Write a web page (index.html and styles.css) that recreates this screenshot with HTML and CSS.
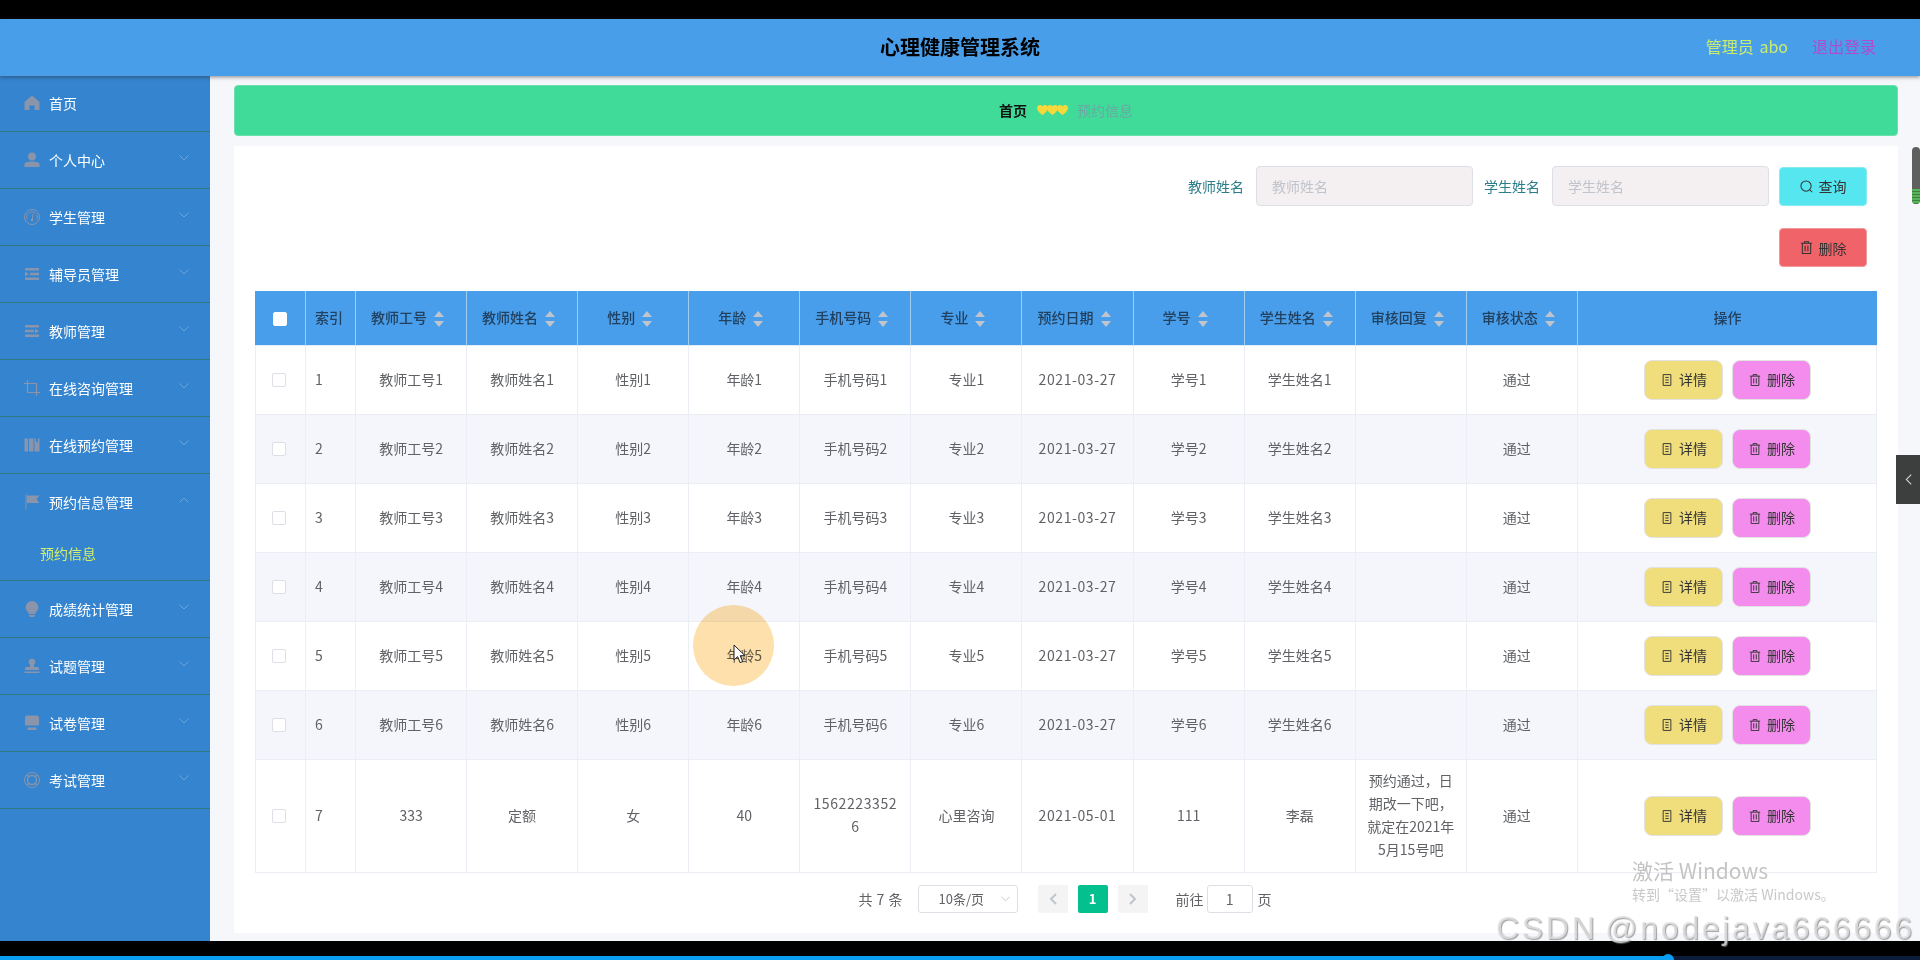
FILE: index.html
```html
<!DOCTYPE html>
<html lang="zh-CN">
<head>
	<meta charset="UTF-8">
	<title>心理健康管理系统</title>
	<link rel="stylesheet" href="styles.css">
</head>
<body>
	<svg class="defs" width="0" height="0">
		<symbol id="i-home" viewBox="0 0 16 16"><path d="M8 1C7.4 1 7 1.300 6.600 1.600L1 6.500C.7 6.800.5 7.200.5 7.700V15h5v-4.500h5V15h5V7.700c0-.5-.2-.9-.5-1.200L9.400 1.600C9 1.300 8.600 1 8 1z"/></symbol>
		<symbol id="i-user" viewBox="0 0 16 16"><circle cx="8" cy="4.500" r="4"/><path d="M.5 15v-2.500C.5 10.500 3 9.500 8 9.500s7.500 1 7.500 3V15z"/></symbol>
		<symbol id="i-gauge" viewBox="0 0 16 16"><g fill="none" stroke="currentColor"><circle cx="8" cy="8" r="7.500"/><path d="M3.200 10.500a5.300 5.300 0 1 1 9.600 0"/><path d="M9 5l-.7 5"/></g><circle cx="8" cy="11" r="1.300"/></symbol>
		<symbol id="i-fold" viewBox="0 0 16 16"><path d="M1 2h14v2.400H1zM6 6.800h9v2.400H6zM1 11.600h14V14H1zM5 8L1 5.500v5z"/></symbol>
		<symbol id="i-unfold" viewBox="0 0 16 16"><path d="M1 2h14v2.400H1zM1 6.800h9v2.400H1zM1 11.600h14V14H1zM15 8l-4-2.500v5z"/></symbol>
		<symbol id="i-crop" viewBox="0 0 16 16"><path d="M3.500 0v12.500H16M0 3.500h12.500V16" fill="none" stroke="currentColor" stroke-width="1.200"/></symbol>
		<symbol id="i-book" viewBox="0 0 16 16"><path d="M.5 1.500h3.500v13H.5zM5 1.500h4.500v13H5zM10.500 1.500h1.500v4l1-1 1 1v-4h1.500v13h-5z"/></symbol>
		<symbol id="i-flag" viewBox="0 0 16 16"><path d="M1.500 .5h1v15h-1zM3 1.500h12.500l-3 3.800 3 3.700H3z"/></symbol>
		<symbol id="i-bulb" viewBox="0 0 16 16"><path d="M8 0a6.300 6.300 0 0 0-3.500 11.500V13h7v-1.500A6.300 6.300 0 0 0 8 0zM5 14h6v.8L9.500 16h-3L5 14.800z"/></symbol>
		<symbol id="i-stamp" viewBox="0 0 16 16"><path d="M8 .5a3.500 3.500 0 0 0-2 6.300V9H2.500C1.500 9 1 9.700 1 10.500V12h14v-1.500c0-.8-.5-1.500-1.500-1.500H10V6.800A3.500 3.500 0 0 0 8 .5zM.5 13.500h15V15H.5z"/></symbol>
		<symbol id="i-shop" viewBox="0 0 16 16"><path d="M3 .5h10c1.200 0 2 .8 2 2V10c-1 1-2 1-2.700 0-.8 1-1.800 1-2.600 0-.6 1-2.800 1-3.400 0-.8 1-1.800 1-2.600 0C3 11 2 11 1 10V2.500C1 1.300 1.800.5 3 .5zM3.500 12.500h9V15h-9z"/></symbol>
		<symbol id="i-ring" viewBox="0 0 16 16"><g fill="none" stroke="currentColor"><circle cx="8" cy="8" r="7.500"/><circle cx="8" cy="8" r="4.500" stroke-width="1.300"/><path d="M3 3l2 2M13 3l-2 2M3 13l2-2M13 13l-2-2" stroke-width="1.300"/></g></symbol>
		<symbol id="i-chevron" viewBox="0 0 10 6"><path d="M.5 .5 5 5 9.500 .5" fill="none" stroke="currentColor"/></symbol>
		<symbol id="i-left" viewBox="0 0 8 12"><path d="M7 1 2 6l5 5" fill="none" stroke="currentColor" stroke-width="2"/></symbol>
		<symbol id="i-right" viewBox="0 0 8 12"><path d="M1 1l5 5-5 5" fill="none" stroke="currentColor" stroke-width="2"/></symbol>
		<symbol id="i-heart" viewBox="0 0 12 11"><path d="M0 3.200C0 1.300 1.400 0 3 0c1.300 0 2.400.7 3 1.500C6.600.7 7.700 0 9 0c1.600 0 3 1.300 3 3.200C12 6.500 8 9.500 6 11 4 9.500 0 6.500 0 3.200z"/></symbol>
		<symbol id="i-search" viewBox="0 0 14 14"><g fill="none" stroke="currentColor" stroke-width="1.100"><circle cx="6.500" cy="6.500" r="5.500"/><path d="M10.500 10.500l2.500 2.500"/></g></symbol>
		<symbol id="i-trash" viewBox="0 0 14 14"><path d="M1 2.500h12M4.800 2.500V.7h4.400v1.800M2.500 2.500v11h9v-11M5.500 5v6M8.500 5v6" fill="none" stroke="currentColor" stroke-width="1.100"/></symbol>
		<symbol id="i-doc" viewBox="0 0 14 14"><path d="M2.500 .7h9v12.600h-9zM5 4h4M5 7h4M5 10h4" fill="none" stroke="currentColor" stroke-width="1.100"/></symbol>
	</svg>

	<div class="black-bar top"></div>

	<header class="topbar">
		<h1 class="title">心理健康管理系统</h1>
		<div class="user-area">
			<span class="admin">管理员 abo</span>
			<span class="logout">退出登录</span>
		</div>
	</header>

	<div class="layout">
		<nav class="sidebar">
			<div class="menu-item first"><svg class="menu-icon"><use href="#i-home"/></svg><span>首页</span></div>
			<div class="menu-item"><svg class="menu-icon"><use href="#i-user"/></svg><span>个人中心</span><svg class="menu-arrow"><use href="#i-chevron"/></svg></div>
			<div class="menu-item"><svg class="menu-icon"><use href="#i-gauge"/></svg><span>学生管理</span><svg class="menu-arrow"><use href="#i-chevron"/></svg></div>
			<div class="menu-item"><svg class="menu-icon"><use href="#i-fold"/></svg><span>辅导员管理</span><svg class="menu-arrow"><use href="#i-chevron"/></svg></div>
			<div class="menu-item"><svg class="menu-icon"><use href="#i-unfold"/></svg><span>教师管理</span><svg class="menu-arrow"><use href="#i-chevron"/></svg></div>
			<div class="menu-item"><svg class="menu-icon"><use href="#i-crop"/></svg><span>在线咨询管理</span><svg class="menu-arrow"><use href="#i-chevron"/></svg></div>
			<div class="menu-item"><svg class="menu-icon"><use href="#i-book"/></svg><span>在线预约管理</span><svg class="menu-arrow"><use href="#i-chevron"/></svg></div>
			<div class="menu-group">
				<div class="menu-item open"><svg class="menu-icon"><use href="#i-flag"/></svg><span>预约信息管理</span><svg class="menu-arrow up"><use href="#i-chevron"/></svg></div>
				<div class="submenu-item">预约信息</div>
			</div>
			<div class="menu-item"><svg class="menu-icon"><use href="#i-bulb"/></svg><span>成绩统计管理</span><svg class="menu-arrow"><use href="#i-chevron"/></svg></div>
			<div class="menu-item"><svg class="menu-icon"><use href="#i-stamp"/></svg><span>试题管理</span><svg class="menu-arrow"><use href="#i-chevron"/></svg></div>
			<div class="menu-item"><svg class="menu-icon"><use href="#i-shop"/></svg><span>试卷管理</span><svg class="menu-arrow"><use href="#i-chevron"/></svg></div>
			<div class="menu-item"><svg class="menu-icon"><use href="#i-ring"/></svg><span>考试管理</span><svg class="menu-arrow"><use href="#i-chevron"/></svg></div>
		</nav>

		<main class="content">
			<div class="breadcrumb">
				<span class="crumb-home">首页</span>
				<span class="crumb-sep">
					<svg><use href="#i-heart"/></svg><svg><use href="#i-heart"/></svg><svg><use href="#i-heart"/></svg>
				</span>
				<span class="crumb-now">预约信息</span>
			</div>

			<section class="panel">
				<div class="search-row">
					<label class="search-label">教师姓名</label>
					<div class="search-input">教师姓名</div>
					<label class="search-label">学生姓名</label>
					<div class="search-input">学生姓名</div>
					<button class="tool-btn btn-query"><svg><use href="#i-search"/></svg>查询</button>
				</div>
				<div class="action-row">
					<button class="tool-btn btn-remove"><svg><use href="#i-trash"/></svg>删除</button>
				</div>

				<table class="data-table">
					<colgroup>
						<col class="col-first"><col class="col-index">
						<col class="col-mid"><col class="col-mid"><col class="col-mid"><col class="col-mid"><col class="col-mid"><col class="col-mid"><col class="col-mid"><col class="col-mid"><col class="col-mid"><col class="col-mid"><col class="col-mid">
						<col class="col-op">
					</colgroup>
					<thead>
						<tr>
							<th><span class="check head"></span></th>
							<th class="left">索引</th>
							<th>教师工号<i class="sort"></i></th>
							<th>教师姓名<i class="sort"></i></th>
							<th>性别<i class="sort"></i></th>
							<th>年龄<i class="sort"></i></th>
							<th>手机号码<i class="sort"></i></th>
							<th>专业<i class="sort"></i></th>
							<th>预约日期<i class="sort"></i></th>
							<th>学号<i class="sort"></i></th>
							<th>学生姓名<i class="sort"></i></th>
							<th>审核回复<i class="sort"></i></th>
							<th>审核状态<i class="sort"></i></th>
							<th>操作</th>
						</tr>
					</thead>
					<tbody>
						<tr>
							<td><span class="check"></span></td><td class="left">1</td>
							<td>教师工号1</td><td>教师姓名1</td><td>性别1</td><td>年龄1</td><td>手机号码1</td><td>专业1</td><td class="digits">2021-03-27</td><td>学号1</td><td>学生姓名1</td><td></td><td class="status">通过</td>
							<td><button class="row-btn detail"><svg><use href="#i-doc"/></svg>详情</button><button class="row-btn del"><svg><use href="#i-trash"/></svg>删除</button></td>
						</tr>
						<tr>
							<td><span class="check"></span></td><td class="left">2</td>
							<td>教师工号2</td><td>教师姓名2</td><td>性别2</td><td>年龄2</td><td>手机号码2</td><td>专业2</td><td class="digits">2021-03-27</td><td>学号2</td><td>学生姓名2</td><td></td><td class="status">通过</td>
							<td><button class="row-btn detail"><svg><use href="#i-doc"/></svg>详情</button><button class="row-btn del"><svg><use href="#i-trash"/></svg>删除</button></td>
						</tr>
						<tr>
							<td><span class="check"></span></td><td class="left">3</td>
							<td>教师工号3</td><td>教师姓名3</td><td>性别3</td><td>年龄3</td><td>手机号码3</td><td>专业3</td><td class="digits">2021-03-27</td><td>学号3</td><td>学生姓名3</td><td></td><td class="status">通过</td>
							<td><button class="row-btn detail"><svg><use href="#i-doc"/></svg>详情</button><button class="row-btn del"><svg><use href="#i-trash"/></svg>删除</button></td>
						</tr>
						<tr>
							<td><span class="check"></span></td><td class="left">4</td>
							<td>教师工号4</td><td>教师姓名4</td><td>性别4</td><td>年龄4</td><td>手机号码4</td><td>专业4</td><td class="digits">2021-03-27</td><td>学号4</td><td>学生姓名4</td><td></td><td class="status">通过</td>
							<td><button class="row-btn detail"><svg><use href="#i-doc"/></svg>详情</button><button class="row-btn del"><svg><use href="#i-trash"/></svg>删除</button></td>
						</tr>
						<tr>
							<td><span class="check"></span></td><td class="left">5</td>
							<td>教师工号5</td><td>教师姓名5</td><td>性别5</td><td>年龄5</td><td>手机号码5</td><td>专业5</td><td class="digits">2021-03-27</td><td>学号5</td><td>学生姓名5</td><td></td><td class="status">通过</td>
							<td><button class="row-btn detail"><svg><use href="#i-doc"/></svg>详情</button><button class="row-btn del"><svg><use href="#i-trash"/></svg>删除</button></td>
						</tr>
						<tr>
							<td><span class="check"></span></td><td class="left">6</td>
							<td>教师工号6</td><td>教师姓名6</td><td>性别6</td><td>年龄6</td><td>手机号码6</td><td>专业6</td><td class="digits">2021-03-27</td><td>学号6</td><td>学生姓名6</td><td></td><td class="status">通过</td>
							<td><button class="row-btn detail"><svg><use href="#i-doc"/></svg>详情</button><button class="row-btn del"><svg><use href="#i-trash"/></svg>删除</button></td>
						</tr>
						<tr>
							<td><span class="check"></span></td><td class="left">7</td>
							<td>333</td><td>定额</td><td>女</td><td>40</td><td class="digits long">15622233526</td><td>心里咨询</td><td class="digits">2021-05-01</td><td>111</td><td>李磊</td><td class="long">预约通过，日期改一下吧，就定在2021年5月15号吧</td><td class="status">通过</td>
							<td><button class="row-btn detail"><svg><use href="#i-doc"/></svg>详情</button><button class="row-btn del"><svg><use href="#i-trash"/></svg>删除</button></td>
						</tr>
					</tbody>
				</table>

				<div class="pagination">
					<span class="total">共 7 条</span>
					<div class="page-size">10条/页<svg><use href="#i-chevron"/></svg></div>
					<span class="page-btn arrow"><svg><use href="#i-left"/></svg></span>
					<span class="page-btn current">1</span>
					<span class="page-btn arrow"><svg><use href="#i-right"/></svg></span>
					<span class="jump">前往</span>
					<span class="jump-input">1</span>
					<span class="jump-end">页</span>
				</div>
			</section>
		</main>
	</div>

	<div class="black-bar bottom"></div>
	<div class="progress"><div class="progress-done"></div></div>

	<!-- things lying over the page -->
	<div class="scroll-thumb"><div class="scroll-grip"></div></div>
	<div class="side-tab"><svg><use href="#i-chevron"/></svg></div>
	<div class="click-spot"></div>
	<svg class="cursor" viewBox="0 0 14 20"><path d="M1 1v15l3.600-3.400 2.500 6 2.600-1.100-2.500-5.800H12z" fill="#fff" stroke="#222" stroke-width="1"/></svg>
	<div class="win-mark">
		<div class="win-title">激活 Windows</div>
		<div class="win-sub">转到“设置”以激活 Windows。</div>
	</div>
	<div class="csdn-mark">CSDN @nodejava666666</div>
	<div class="progress-dot"></div>
</body>
</html>
```

FILE: styles.css
```css
* {
	box-sizing: border-box;
}

html, body {
	margin: 0;
	height: 960px;
	overflow: hidden;
}

body {
	position: relative;
	display: flex;
	flex-direction: column;
	width: 1920px;
	font-family: "Noto Sans CJK SC", "Liberation Sans", sans-serif;
	font-size: 14px;
	color: #606266;
	background: #000;
}

svg {
	fill: currentColor;
}

.defs {
	position: absolute;
}

.black-bar.top {
	height: 19px;
	background: #000;
}

.black-bar.bottom {
	height: 15px;
	background: #000;
}

/* top header */
.topbar {
	position: relative;
	z-index: 2;
	display: flex;
	align-items: center;
	justify-content: center;
	height: 57px;
	padding-bottom: 2px;
	flex-shrink: 0;
	background: #499eea;
	box-shadow: 0 1px 4px rgba(40, 40, 40, .55);
}

.title {
	margin: 0;
	font-size: 20px;
	font-weight: 700;
	line-height: 28px;
	color: #000;
}

.user-area {
	position: absolute;
	right: 44px;
	top: 0;
	display: flex;
	gap: 24px;
	font-size: 16px;
	line-height: 54px;
}

.admin {
	color: #c9ec6e;
	word-spacing: 2px;
}

.logout {
	color: #b04ccb;
}

/* sidebar + page */
.layout {
	display: flex;
	height: 865px;
}

.sidebar {
	width: 210px;
	flex-shrink: 0;
	background: #3484cf;
}

.menu-item {
	display: flex;
	align-items: center;
	height: 57px;
	padding-left: 24px;
	color: #fff;
	line-height: 20px;
	border-bottom: 1px solid #2f7a7c;
}

.menu-item.first {
	height: 56px;
	padding-bottom: 1px;
}

.menu-item.open {
	height: 56px;
	border-bottom: 0;
}

.menu-group {
	height: 107px;
	border-bottom: 1px solid #2f7a7c;
}

.menu-icon {
	width: 16px;
	height: 16px;
	margin-right: 9px;
	color: #8a94aa;
	flex-shrink: 0;
}

.menu-arrow {
	width: 10px;
	height: 6px;
	margin-left: auto;
	margin-right: 21px;
	margin-bottom: 5px;
	color: #6da6dc;
}

.menu-arrow.up {
	transform: rotate(180deg);
}

.submenu-item {
	height: 50px;
	padding: 0 0 0 40px;
	line-height: 47px;
	color: #d5ee6c;
}

.content {
	display: flex;
	flex-direction: column;
	flex: 1;
	padding: 9px 22px 8px 24px;
	background: #f5f7fb;
}

.breadcrumb {
	display: flex;
	align-items: center;
	justify-content: center;
	height: 51px;
	margin-bottom: 10px;
	padding-bottom: 2px;
	flex-shrink: 0;
	background: #40db98;
	border: 1px solid #6de0b0;
	border-radius: 4px;
	line-height: 20px;
}

.crumb-home {
	font-weight: 700;
	color: #111;
}

.crumb-sep {
	display: flex;
	margin: 0 10px;
	color: #f5d83c;
}

.crumb-sep svg {
	width: 11px;
	height: 10px;
	margin-right: -1px;
}

.crumb-now {
	color: #6aa8a4;
}

.panel {
	flex: 1;
	padding: 20px 21px 0;
	background: #fff;
}

/* search */
.search-row {
	display: flex;
	align-items: center;
	justify-content: flex-end;
	height: 40px;
	padding-right: 10px;
}

.search-label {
	margin-right: 12px;
	color: #2b7d88;
	line-height: 20px;
}

.search-input {
	width: 217px;
	height: 40px;
	margin-right: 11px;
	padding-left: 15px;
	line-height: 38px;
	color: #c0c4cc;
	background: #f4eff1;
	border: 1px solid #dcdfe6;
	border-radius: 4px;
}

.tool-btn {
	display: flex;
	align-items: center;
	justify-content: center;
	width: 88px;
	height: 39px;
	padding: 0;
	font: inherit;
	color: #333;
	border: 1px solid #e3e6ee;
	border-radius: 4px;
}

.tool-btn svg {
	width: 13px;
	height: 13px;
	margin-right: 6px;
}

.btn-query {
	margin-left: -1px;
	background: #55e6f0;
	border-color: #8aeaf2;
}

.btn-remove {
	background: #f06368;
	border-color: #f19a9c;
}

.action-row {
	display: flex;
	justify-content: flex-end;
	height: 39px;
	margin-top: 22px;
	margin-bottom: 24px;
	padding-right: 10px;
}

/* table */
.data-table {
	width: 1622px;
	table-layout: fixed;
	border-collapse: separate;
	border-spacing: 0;
}

.col-first {
	width: 51px;
}

.col-index {
	width: 50px;
}

.col-mid {
	width: 111.09px;
}

.col-op {
	width: 299px;
}

.data-table th {
	height: 55px;
	padding: 0 0 1px;
	font-weight: 500;
	line-height: 23px;
	color: #22405f;
	background: #489eea;
	border-right: 1px solid #a0ccef;
	border-bottom: 1px solid #e3edf6;
}

.data-table th:last-child {
	border-right: 0;
}

.data-table td {
	height: 69px;
	padding: 9px 10px 11px;
	text-align: center;
	line-height: 23px;
	border-right: 1px solid #ebeef5;
	border-bottom: 1px solid #ebeef5;
}

.data-table td:first-child {
	border-left: 1px solid #ebeef5;
}

.data-table tbody tr:nth-child(even) td {
	background: #f5f6fb;
}

.data-table .left {
	padding-left: 9px;
	text-align: left;
}

.data-table .long {
	word-break: break-all;
}

.data-table .digits {
	letter-spacing: .6px;
}

.data-table .status {
	padding-right: 20px;
}

.sort {
	position: relative;
	display: inline-block;
	width: 24px;
	height: 16px;
	vertical-align: middle;
}

.sort::before,
.sort::after {
	content: "";
	position: absolute;
	left: 7px;
	border-left: 5px solid transparent;
	border-right: 5px solid transparent;
}

.sort::before {
	top: 0;
	border-bottom: 6px solid #c0c4cc;
}

.sort::after {
	bottom: 0;
	border-top: 6px solid #c0c4cc;
}

.check {
	display: inline-block;
	width: 14px;
	height: 14px;
	margin: -2px 0 0 -3px;
	vertical-align: middle;
	background: #fff;
	border: 1px solid #dcdfe6;
	border-radius: 2px;
}

.check.head {
	margin: 0;
	border-color: #fff;
}

.row-btn {
	display: inline-flex;
	align-items: center;
	justify-content: center;
	width: 79px;
	height: 40px;
	margin-top: 1px;
	margin-left: 2px;
	padding: 0;
	font: inherit;
	color: #333;
	border: 1px solid #e2e2e2;
	border-radius: 8px;
	vertical-align: middle;
}

.row-btn svg {
	width: 12px;
	height: 12px;
	margin-right: 6px;
}

.row-btn + .row-btn {
	margin-left: 9px;
}

.detail {
	background: #f0de7c;
}

.del {
	background: #f48cee;
}

/* pagination */
.pagination {
	display: flex;
	align-items: center;
	justify-content: center;
	height: 28px;
	margin-top: 12px;
	padding-right: 2px;
	line-height: 20px;
}

.total {
	margin-right: 15px;
	word-spacing: 1px;
}

.page-size {
	position: relative;
	width: 100px;
	height: 28px;
	margin-right: 20px;
	padding-left: 20px;
	font-size: 13px;
	line-height: 26px;
	border: 1px solid #dcdfe6;
	border-radius: 3px;
}

.page-size svg {
	position: absolute;
	right: 7px;
	top: 10px;
	width: 9px;
	height: 6px;
	color: #c0c4cc;
}

.page-btn {
	display: flex;
	align-items: center;
	justify-content: center;
	width: 30px;
	height: 28px;
	margin-right: 10px;
	font-size: 13px;
	font-weight: 700;
	border-radius: 2px;
}

.page-btn.arrow {
	color: #c0c4cc;
	background: #f4f4f5;
}

.page-btn.arrow svg {
	width: 8px;
	height: 12px;
}

.page-btn.current {
	color: #fff;
	background: #04c08f;
}

.jump {
	margin-left: 18px;
}

.jump-input {
	width: 46px;
	height: 28px;
	margin: 0 5px 0 3px;
	text-align: center;
	line-height: 26px;
	border: 1px solid #dcdfe6;
	border-radius: 3px;
}

/* player bar below the capture */
.progress {
	height: 4px;
	background: #0b1c3a;
}

.progress-done {
	width: 1668px;
	height: 4px;
	background: #0a9ef2;
}

.progress-dot {
	position: absolute;
	left: 1662px;
	top: 954px;
	width: 12px;
	height: 12px;
	background: #0a9ef2;
	border-radius: 50%;
}

/* overlays */
.scroll-thumb {
	position: absolute;
	left: 1912px;
	top: 147px;
	width: 8px;
	height: 57px;
	overflow: hidden;
	background: #5f5f5f;
	border-radius: 4px;
}

.scroll-grip {
	margin-top: 42px;
	height: 15px;
	background: repeating-linear-gradient(#58b458 0 2px, #3f7f3f 2px 3px);
}

.side-tab {
	position: absolute;
	left: 1896px;
	top: 455px;
	display: flex;
	align-items: center;
	justify-content: center;
	width: 24px;
	height: 49px;
	color: #cfd2d2;
	background: #3d3f3f;
}

.side-tab svg {
	width: 11px;
	height: 7px;
	fill: none;
	transform: rotate(90deg);
}

.click-spot {
	position: absolute;
	left: 693px;
	top: 605px;
	width: 81px;
	height: 81px;
	background: #fee0ad;
	border-radius: 50%;
	mix-blend-mode: multiply;
}

.cursor {
	position: absolute;
	left: 733px;
	top: 644px;
	width: 14px;
	height: 20px;
}

.win-mark {
	position: absolute;
	left: 1632px;
	top: 856px;
	color: #c4c4c4;
}

.win-title {
	font-size: 21px;
	line-height: 28px;
}

.win-sub {
	font-size: 14px;
	line-height: 20px;
	color: #c8c8c8;
}

.csdn-mark {
	position: absolute;
	left: 1496px;
	top: 905px;
	font-family: "Liberation Sans", sans-serif;
	font-size: 32px;
	line-height: 46px;
	letter-spacing: 2.7px;
	word-spacing: -4px;
	white-space: nowrap;
	color: rgba(225, 225, 225, .8);
	text-shadow: 1px 1px 1px rgba(120, 120, 120, .7);
}
```
